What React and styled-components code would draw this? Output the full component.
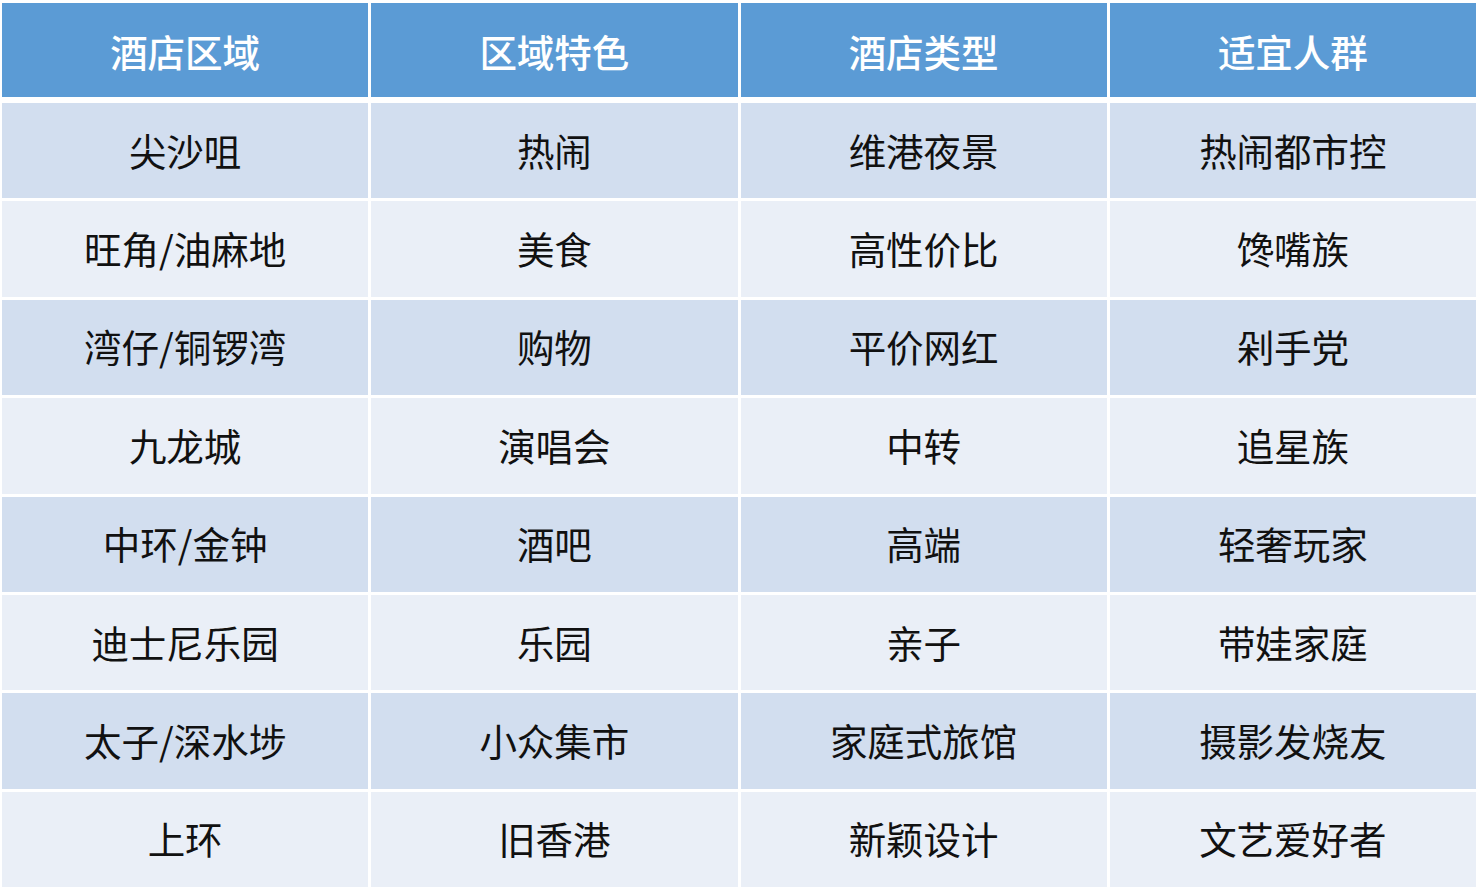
import React from 'react';
import styled, { createGlobalStyle } from 'styled-components';

const GlobalStyle = createGlobalStyle`
  html, body {
    margin: 0;
    padding: 0;
    background: #ffffff;
  }
  body {
    font-family: "Noto Sans CJK SC", "Noto Sans", sans-serif;
  }
`;

const Page = styled.div`
  padding: 3px 0 0 2px;
`;

const Table = styled.div`
  width: 1474px;
  display: flex;
  flex-direction: column;
  gap: 3px;
`;

const Header = styled.div`
  display: grid;
  grid-template-columns: repeat(4, 1fr);
  gap: 3px;
  margin-bottom: 3px;
`;

const HeadCell = styled.div`
  height: 94px;
  background: #5b9bd5;
  color: #ffffff;
  font-size: 37.5px;
  font-weight: 500;
  display: flex;
  align-items: center;
  justify-content: center;
`;

const Row = styled.div`
  display: grid;
  grid-template-columns: repeat(4, 1fr);
  gap: 3px;
`;

const Cell = styled.div`
  box-sizing: border-box;
  height: 95.4px;
  padding-bottom: 3px;
  background: ${(p) => (p.$odd ? '#d2deef' : '#eaeff7')};
  color: #111111;
  font-size: 37.5px;
  display: flex;
  align-items: center;
  justify-content: center;
`;

const headers = ['酒店区域', '区域特色', '酒店类型', '适宜人群'];

const rows = [
  ['尖沙咀', '热闹', '维港夜景', '热闹都市控'],
  ['旺角/油麻地', '美食', '高性价比', '馋嘴族'],
  ['湾仔/铜锣湾', '购物', '平价网红', '剁手党'],
  ['九龙城', '演唱会', '中转', '追星族'],
  ['中环/金钟', '酒吧', '高端', '轻奢玩家'],
  ['迪士尼乐园', '乐园', '亲子', '带娃家庭'],
  ['太子/深水埗', '小众集市', '家庭式旅馆', '摄影发烧友'],
  ['上环', '旧香港', '新颖设计', '文艺爱好者'],
];

export default function App() {
  return (
    <>
      <GlobalStyle />
      <Page>
        <Table>
          <Header>
            {headers.map((h) => (
              <HeadCell key={h}>{h}</HeadCell>
            ))}
          </Header>
          {rows.map((r, i) => (
            <Row key={r[0]}>
              {r.map((c, j) => (
                <Cell key={j} $odd={i % 2 === 0}>
                  {c}
                </Cell>
              ))}
            </Row>
          ))}
        </Table>
      </Page>
    </>
  );
}
